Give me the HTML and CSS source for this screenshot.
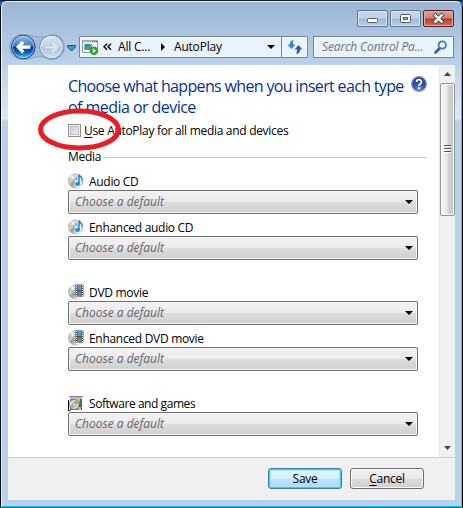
FILE: index.html
```
<!DOCTYPE html>
<html lang="en">
<head>
<meta charset="utf-8">
<title>AutoPlay</title>
<link rel="stylesheet" href="styles.css">
</head>
<body>
<svg class="defs" width="0" height="0" aria-hidden="true">
  <defs>
    <linearGradient id="disc" x1="0" y1="0" x2="1" y2="1"><stop offset="0" stop-color="#a9aba9"/><stop offset=".3" stop-color="#ddd"/><stop offset=".5" stop-color="#9a9d9c"/><stop offset=".75" stop-color="#e2e2e2"/><stop offset="1" stop-color="#929292"/></linearGradient>
    <linearGradient id="back" x1="0" y1="0" x2="0" y2="1"><stop offset="0" stop-color="#9fc0e8"/><stop offset=".46" stop-color="#3d79c3"/><stop offset=".5" stop-color="#0a3a90"/><stop offset=".72" stop-color="#0b5cbd"/><stop offset="1" stop-color="#4fd6fa"/></linearGradient>
    <linearGradient id="fwd" x1="0" y1="0" x2="0" y2="1"><stop offset="0" stop-color="#d9e5f1"/><stop offset=".48" stop-color="#c3d3e4"/><stop offset=".52" stop-color="#aec3da"/><stop offset="1" stop-color="#d0e1f3"/></linearGradient>
    <radialGradient id="help" cx=".5" cy=".85" r=".8"><stop offset="0" stop-color="#6d94ee"/><stop offset=".5" stop-color="#2b50bc"/><stop offset="1" stop-color="#223a94"/></radialGradient>
    <g id="cd"><circle cx="7.6" cy="8" r="7.2" fill="url(#disc)" stroke="#a0a3a2" stroke-width=".6"/><path d="M7.6 8 2 3.2 4.5 1.5z" fill="#eef1ee"/><path d="M.8 5.800 4 7.300.6 7.600z" fill="#8bdc45"/><path d="M7.6 8 12 14 9 15z" fill="#f5f5f5"/><circle cx="7.6" cy="8" r="2.1" fill="#ccc" stroke="#888" stroke-width=".6"/><circle cx="7.6" cy="8" r=".8" fill="#fff"/></g>
    <symbol id="audio" viewBox="0 0 16 16"><use href="#cd"/><path d="M11 11V1.500c.5 2.300 4.300 2.600 3.300 6.500" fill="none" stroke="#fff" stroke-width="3"/><ellipse cx="9.700" cy="11" rx="3.200" ry="2.800" fill="#e6f5ff"/><path d="M11 11V1.500c.5 2.300 4.300 2.600 3.300 6.500" fill="none" stroke="#1683d0" stroke-width="1.500"/><ellipse cx="9.500" cy="11" rx="2.500" ry="2.100" fill="#1593e6"/></symbol>
    <symbol id="dvd" viewBox="0 0 16 16"><use href="#cd"/><path d="M7.500.500h8v12h-8z" fill="#44505a"/><path d="M9.500 1h4v5h-4z" fill="#4c9bd7"/><path d="M9.500 7h4v5h-4z" fill="#bd6f67"/><path d="M9.500 7h4v2h-4z" fill="#527ca5"/><path d="M8.500 1v11M14.500 1v11" stroke="#e9eef2" stroke-width="1" stroke-dasharray="1 1"/></symbol>
    <symbol id="software" viewBox="0 0 16 16"><path d="M2 1h12v4H2z" fill="#b8b6dc"/><path d="M1 1.500h14" stroke="#7d79b5"/><path d="M2 4h12v11H2z" fill="#6985a4"/><path d="M8 3h4v5H8z" fill="#e8c04a"/><path d="M12 4h2v11h-3v-4z" fill="#2d7f4d"/><circle cx="6" cy="9.500" r="5" fill="url(#disc)" stroke="#637073" stroke-width=".7"/><circle cx="6" cy="9.500" r="1.500" fill="#eee" stroke="#7b8583" stroke-width=".6"/><path d="M.5 5v11M.5 15.500h2" stroke="#111"/><path d="M10 12h3v3h-3z" fill="#deb538"/></symbol>
  </defs>
</svg>
<div class="window">
  <header class="caption">
    <button class="cap" aria-label="Minimize"><svg width="29" height="15"><rect x="9.500" y="7.500" width="10" height="4" rx="1" fill="#fff" stroke="#535b68"/></svg></button>
    <button class="cap" aria-label="Maximize"><svg width="29" height="15"><rect x="9.500" y="3.500" width="10" height="8" rx="1" fill="#fff" stroke="#535b68"/><rect x="12.500" y="6.500" width="4" height="2" fill="#9fb9d8" stroke="#535b68"/></svg></button>
    <button class="cap close" aria-label="Close"><svg width="29" height="15"><path d="m11.500 4.500 6 6m0-6-6 6" stroke="#535666" stroke-width="4.400" stroke-linecap="square"/><path d="m11.500 4.500 6 6m0-6-6 6" stroke="#fff" stroke-width="2.400" stroke-linecap="square"/></svg></button>
  </header>
  <nav class="nav">
    <svg class="travel" width="70" height="28" viewBox="0 0 70 28">
      <path d="M14 1.500C23 1.500 23 4 32.500 4S42 1.500 44 1.500a12.500 12.500 0 0 1 0 25c-5 0-7-3-11.500-3S23 26.500 14 26.500a12.500 12.500 0 0 1 0-25z" fill="#a3bbd5" stroke="#8ba5c3"/>
      <circle cx="15.300" cy="14" r="11.800" fill="url(#back)" stroke="#23426f"/><circle cx="15.300" cy="14" r="10.700" fill="none" stroke="#d2e6fa" stroke-opacity=".6"/>
      <path d="m8 14 6-6.300 2.400 2.400-2.200 2.300h8.100v3.400h-8.100l2.200 2.300-2.400 2.300z" fill="#fff"/>
      <circle cx="43.500" cy="14" r="11.800" fill="url(#fwd)" stroke="#708aa8"/><circle cx="43.500" cy="14" r="10.700" fill="none" stroke="#e9f1fa" stroke-opacity=".8"/>
      <path d="m51 14-6-6.300-2.400 2.400 2.200 2.300h-8.100v3.400h8.100l-2.200 2.300 2.400 2.300z" fill="#d9e4ef" stroke="#b3c5d8" stroke-width=".7"/>
      <path d="M59.500 12.500h8v1.500l-4 4-4-4z" fill="#3b9ad4" stroke="#20527f"/>
    </svg>
    <div class="address">
      <svg width="17" height="17" viewBox="0 0 17 17"><path d="M.5 1.500h15v12H.5z" fill="#f4f6f7" stroke="#92979b"/><path d="M1 1.500h14v2H1z" fill="#b8bdc2"/><path d="M10 2.500h1m1 0h1m1 0h1" stroke="#555"/><path d="M2.500 5h7v6h-7z" fill="#3b85a0"/><path d="M2.500 9 9.500 5v6h-7z" fill="#4f9a7d"/><circle cx="12" cy="11.700" r="4.200" fill="#27a62e"/><path d="m10.800 9.200 3.400 2.500-3.400 2.500z" fill="#fff"/></svg>
      <svg class="chev" width="9" height="8" viewBox="0 0 9 8"><path d="M4 .8 1 3.800l3 3M8 .8 5 3.800l3 3" fill="none" stroke="#000" stroke-width="1.400"/></svg>
      <span class="crumb">All C...</span>
      <svg class="sep" width="4" height="8"><path d="M0 0v8l4-4z"/></svg>
      <span class="crumb last">AutoPlay</span>
      <svg class="drop" width="8" height="4"><path d="M0 0h8L4 4z" fill="#00004a"/></svg>
      <div class="refresh"><svg width="16" height="14" viewBox="0 0 16 14"><path d="M6.500 0C3.500.3 3 2 3 4.500H.5L4.500 9l4-4.500H6C6 2.500 6 1.500 6.500 0z" fill="#2b86d3"/><path d="M9 14c3.300-.3 4-2 4-4.500h2.500L11.500 5l-4 4.500H10c0 2-.2 3-1 4.500z" fill="#315ea9"/></svg></div>
    </div>
    <div class="search"><span>Search Control Pa...</span><svg width="14" height="14" viewBox="0 0 14 14"><path d="M5.500 8.500 1.500 12.500" stroke="#2d5ca8" stroke-width="2.500" stroke-linecap="round"/><circle cx="8.300" cy="5" r="3.700" fill="#eef6fd" stroke="#3979c4" stroke-width="1.800"/></svg></div>
  </nav>
  <div class="client">
    <div class="body">
      <main class="page">
        <div class="top"><h1>Choose what happens when you insert each type<br><span>of media or device</span></h1>
          <svg class="help" width="16" height="16" viewBox="0 0 16 16"><circle cx="8" cy="8" r="7.300" fill="url(#help)" stroke="#858da0" stroke-width="1.300"/><path d="M5.500 6c.2-3.300 5.200-2.900 5 0C10.400 7.800 8 7.700 8 10" fill="none" stroke="#fff" stroke-width="1.800"/><circle cx="8" cy="12.200" r="1.100" fill="#fff"/></svg></div>
        <div class="check"><i class="box"></i><span><u>U</u>se AutoPlay for all media and devices</span>
          <svg class="ring" width="86" height="44"><ellipse cx="42.500" cy="21.500" rx="39" ry="18.500" fill="none" stroke="#ed1c24" stroke-width="5"/></svg></div>
        <div class="legend"><span>Media</span><hr></div>
        <section class="group">
          <div class="label"><svg><use href="#audio"/></svg><span>Audio CD</span></div>
          <div class="select"><span>Choose a default</span><b></b></div>
          <div class="label"><svg><use href="#audio"/></svg><span>Enhanced audio CD</span></div>
          <div class="select"><span>Choose a default</span><b></b></div>
        </section>
        <section class="group">
          <div class="label"><svg><use href="#dvd"/></svg><span>DVD movie</span></div>
          <div class="select"><span>Choose a default</span><b></b></div>
          <div class="label"><svg><use href="#dvd"/></svg><span>Enhanced DVD movie</span></div>
          <div class="select"><span>Choose a default</span><b></b></div>
        </section>
        <section class="group">
          <div class="label"><svg><use href="#software"/></svg><span class="tight">Software and games</span></div>
          <div class="select"><span>Choose a default</span><b></b></div>
        </section>
      </main>
      <div class="scroll">
        <div class="arrow"><svg width="7" height="4"><path d="M0 4h7L3.500 0z" fill="#444"/></svg></div>
        <div class="thumb"><svg width="7" height="9"><path d="M0 .5h7M0 3.500h7M0 6.500h7" stroke="#555"/><path d="M0 1.500h7M0 4.500h7M0 7.500h7" stroke="#fff"/></svg></div>
        <div class="arrow down"><svg width="7" height="4"><path d="M0 0h7L3.500 4z" fill="#444"/></svg></div>
      </div>
    </div>
    <footer class="footer"><button class="btn save">Save</button><button class="btn"><span><u>C</u>ancel</span></button></footer>
  </div>
</div>
</body>
</html>
```
FILE: styles.css
```
* { box-sizing: border-box; }
body { margin: 0; background: linear-gradient(#0c62b5, #0c62b5 6px, transparent 6px), #05080e; border-top: 1px solid #111923; font: 12px/16px "Open Sans", "Noto Sans", sans-serif; letter-spacing: -.3px; color: #000; overflow: hidden; }
.defs { position: absolute; }
button { font: inherit; letter-spacing: inherit; color: inherit; padding: 0; }
svg { display: block; flex: none; }
span { white-space: nowrap; }
.window { width: 461px; height: 506px; margin-left: 1px; border: 1px solid #e9f3fc; border-right-color: #3bc8dc; border-bottom-color: #18c5d5; border-radius: 6px 6px 0 0; padding: 0 6px 6px 5px; background: linear-gradient(#9bb5d3, #a9c1de 25px, #b9d0ea 60px, #c9dcf0 85px, #dce8f5 117px, #b9d0ea 119px, #b9d0ea); display: flex; flex-direction: column; }
.caption { height: 33px; flex: none; display: flex; justify-content: flex-end; gap: 2px; padding: 8px 1px 0 0; }
.cap { width: 31px; height: 17px; border: 1px solid #5f7590; border-radius: 2px; background: linear-gradient(#c6d8ed, #bdd1e9 48%, #9db8d6 52%, #b7cde6); box-shadow: inset 0 0 0 1px #dce8f6; display: flex; }
.close { border-color: #561b24; background: linear-gradient(#dda195, #cd8071 48%, #b33b24 52%, #cf7358); box-shadow: inset 0 0 0 1px #e3ada2; }
.nav { height: 30px; flex: none; display: flex; align-items: flex-start; padding-left: 1px; }
.travel { margin-top: -2px; }
.address { width: 229px; height: 22px; margin: 1px 0 0 1px; border: 1px solid #70849c; border-radius: 1px; background: #eaf2fb; box-shadow: inset 0 0 0 1px #f8fbfe; display: flex; align-items: center; padding-left: 2px; }
.chev { margin-left: 4px; }
.crumb { margin-left: 6px; width: 36px; letter-spacing: -.2px; }
.sep { margin-left: 7px; }
.last { margin-left: 9px; width: auto; }
.drop { margin-left: auto; }
.refresh { width: 26px; height: 20px; margin-left: 6px; border-left: 1px solid #70849c; display: flex; align-items: center; justify-content: center; }
.search { width: 141px; height: 22px; margin: 1px 0 0 5px; border: 1px solid #70849c; background: #eaf2fb; box-shadow: inset 0 0 0 1px #f8fbfe; display: flex; align-items: center; justify-content: space-between; padding: 0 5px 0 8px; color: #6c7279; font-style: italic; letter-spacing: -.13px; }
.client { height: 435px; margin: 0 0 0 1px; width: 447px; flex: none; display: flex; flex-direction: column; background: #fff; }
.body { height: 392px; display: flex; }
.page { width: 431px; padding: 10px 12px 0 60px; }
.top { height: 44px; display: flex; justify-content: space-between; }
h1 { width: 340px; margin: 1px 0 0; font-size: 16px; line-height: 21px; font-weight: 400; color: #003399; letter-spacing: -.66px; white-space: nowrap; }
h1 span { letter-spacing: -.55px; }
.help { margin-top: 1px; }
.check { position: relative; height: 22px; display: flex; align-items: center; gap: 3px; }
.check span { padding-top: 1px; }
.box { width: 13px; height: 13px; border: 1px solid #8e8f8f; background: linear-gradient(135deg, #c4c8cd, #f7f7f7); box-shadow: inset 0 0 0 1px #f4f4f4, inset 0 0 0 2px #b8bec4; }
u { text-underline-offset: 2px; text-decoration-thickness: 1px; }
.ring { position: absolute; left: -31px; top: -11px; }
.legend { height: 27px; display: flex; align-items: center; gap: 2px; padding-top: 5px; }
hr { flex: 1; margin: 0; border: 0; border-top: 1px solid #c6c6c6; }
.group { margin-bottom: 19px; }
.label { height: 22px; display: flex; align-items: center; gap: 5px; padding-top: 4px; }
.label span { padding-top: 2px; }
.label .tight { letter-spacing: -.44px; }
.label svg { width: 16px; height: 16px; }
.select { width: 350px; height: 24px; border: 1px solid #707070; border-radius: 2px; background: linear-gradient(#f2f2f2, #ebebeb 48%, #ddd 52%, #cfcfcf); box-shadow: inset 0 0 0 1px #f5f5f5; display: flex; align-items: center; justify-content: space-between; padding: 0 4px 0 6px; font-style: italic; color: #666; letter-spacing: 0; }
.select b { border: 4px solid transparent; border-top-color: #000; border-bottom: 0; }
.scroll { width: 16px; background: #f0f0f0; border-left: 1px solid #e7e7e7; display: flex; flex-direction: column; }
.arrow { height: 18px; display: flex; align-items: center; justify-content: center; }
.thumb { height: 133px; width: 15px; padding-bottom: 0; border: 1px solid #959595; border-radius: 2px; background: linear-gradient(90deg, #f5f5f5, #e9e9eb 48%, #d5d5d8 52%, #c5c5c8); box-shadow: inset 0 0 0 1px #fafafa; display: flex; align-items: center; justify-content: center; }
.down { margin-top: auto; }
.footer { height: 43px; border-top: 1px solid #ccc; background: #f0f0f0; display: flex; gap: 8px; padding: 10px 31px 0 0; justify-content: flex-end; }
.btn { width: 74px; height: 21px; border: 1px solid #707070; border-radius: 3px; background: linear-gradient(#f2f2f2, #ebebeb 48%, #ddd 52%, #cfcfcf); box-shadow: inset 0 0 0 1px #fafafa; }
.save { border-color: #3c7fb1; background: linear-gradient(#e9f6fd, #d9f0fc 48%, #bee6fd 52%, #a7d9f5); box-shadow: inset 0 0 0 1px #35cdf5, inset 0 0 0 2px #a9e7fb; }
```
